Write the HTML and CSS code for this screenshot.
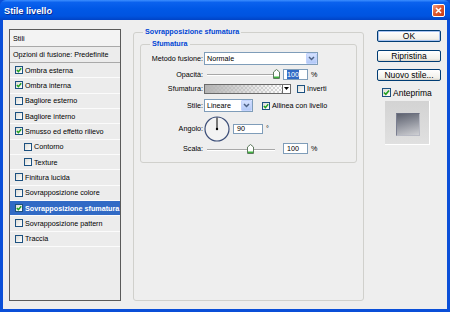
FILE: index.html
```html
<!DOCTYPE html>
<html lang="it">
<head>
  <meta charset="UTF-8">
  <title>Stile livello</title>
  <link rel="stylesheet" href="styles.css">
</head>
<body>
  <div class="window">
    <div class="titlebar">
      <span class="title">Stile livello</span>
      <span class="close">
        <svg width="7" height="7" viewBox="0 0 7 7"><path d="M1 1L6 6M6 1L1 6" stroke="#fff" stroke-width="1.6"/></svg>
      </span>
    </div>

    <div class="client">
      <!-- elenco stili -->
      <div class="styles">
        <div class="head first">Stili</div>
        <div class="head">Opzioni di fusione: Predefinite</div>
        <div class="item"><span class="cb"><svg viewBox="0 0 6 6"><path d="M0.8 3L2.4 4.6L5.2 1.2" fill="none" stroke="#21a121" stroke-width="1.4"/></svg></span>Ombra esterna</div>
        <div class="item"><span class="cb"><svg viewBox="0 0 6 6"><path d="M0.8 3L2.4 4.6L5.2 1.2" fill="none" stroke="#21a121" stroke-width="1.4"/></svg></span>Ombra interna</div>
        <div class="item"><span class="cb"></span>Bagliore esterno</div>
        <div class="item"><span class="cb"></span>Bagliore interno</div>
        <div class="item"><span class="cb"><svg viewBox="0 0 6 6"><path d="M0.8 3L2.4 4.6L5.2 1.2" fill="none" stroke="#21a121" stroke-width="1.4"/></svg></span>Smusso ed effetto rilievo</div>
        <div class="item sub"><span class="cb"></span>Contorno</div>
        <div class="item sub"><span class="cb"></span>Texture</div>
        <div class="item"><span class="cb"></span>Finitura lucida</div>
        <div class="item"><span class="cb"></span>Sovrapposizione colore</div>
        <div class="item sel"><span class="cb"><svg viewBox="0 0 6 6"><path d="M0.8 3L2.4 4.6L5.2 1.2" fill="none" stroke="#21a121" stroke-width="1.4"/></svg></span>Sovrapposizione sfumatura</div>
        <div class="item"><span class="cb"></span>Sovrapposizione pattern</div>
        <div class="item"><span class="cb"></span>Traccia</div>
      </div>

      <!-- pannello opzioni -->
      <fieldset class="group outer">
        <legend>Sovrapposizione sfumatura</legend>
        <fieldset class="group inner">
          <legend>Sfumatura</legend>

          <div class="row r1">
            <span class="lbl">Metodo fusione:</span>
            <div class="select wide">
              <span class="val">Normale</span>
              <span class="drop"><svg width="7" height="5" viewBox="0 0 7 5"><path d="M1 1L3.5 3.5L6 1" fill="none" stroke="#4d6185" stroke-width="1.5"/></svg></span>
            </div>
          </div>

          <div class="row r2">
            <span class="lbl">Opacità:</span>
            <div class="slider">
              <span class="track"></span>
              <svg class="thumb" style="left: 66px" width="7" height="10" viewBox="0 0 7 10"><path d="M0.5 3L3.5 0.5L6.5 3V9.5H0.5Z" fill="#fff" stroke="#5e7a5e"/><rect x="1" y="7.5" width="5" height="1.5" fill="#3fb33f"/></svg>
            </div>
            <div class="num"><span class="hl">100</span></div>
            <span class="unit">%</span>
          </div>

          <div class="row r3">
            <span class="lbl">Sfumatura:</span>
            <div class="swatch"></div>
            <span class="swatch-drop"><svg width="5" height="3" viewBox="0 0 5 3"><path d="M0 0H5L2.5 3Z" fill="#000"/></svg></span>
            <span class="cb gap"></span>
            <span class="opt">Inverti</span>
          </div>

          <div class="row r4">
            <span class="lbl">Stile:</span>
            <div class="select short">
              <span class="val">Lineare</span>
              <span class="drop"><svg width="7" height="5" viewBox="0 0 7 5"><path d="M1 1L3.5 3.5L6 1" fill="none" stroke="#4d6185" stroke-width="1.5"/></svg></span>
            </div>
            <span class="cb gap2"><svg viewBox="0 0 6 6"><path d="M0.8 3L2.4 4.6L5.2 1.2" fill="none" stroke="#21a121" stroke-width="1.4"/></svg></span>
            <span class="opt">Allinea con livello</span>
          </div>

          <div class="row r5">
            <span class="lbl">Angolo:</span>
            <svg class="dial" width="26" height="26" viewBox="0 0 26 26">
              <circle cx="13" cy="13" r="12" fill="#f3f3f3" stroke="#3c4e78" stroke-width="1.2"/>
              <path d="M13 13V1.5" stroke="#000"/>
              <circle cx="13" cy="13" r="1.2" fill="#000"/>
            </svg>
            <div class="num deg">90</div>
            <span class="unit">°</span>
          </div>

          <div class="row r6">
            <span class="lbl">Scala:</span>
            <div class="slider">
              <span class="track"></span>
              <svg class="thumb" style="left: 40px" width="7" height="10" viewBox="0 0 7 10"><path d="M0.5 3L3.5 0.5L6.5 3V9.5H0.5Z" fill="#fff" stroke="#5e7a5e"/><rect x="1" y="7.5" width="5" height="1.5" fill="#3fb33f"/></svg>
            </div>
            <div class="num">100</div>
            <span class="unit">%</span>
          </div>
        </fieldset>
      </fieldset>

      <!-- pulsanti -->
      <div class="side">
        <div class="btn default">OK</div>
        <div class="btn b2">Ripristina</div>
        <div class="btn b3">Nuovo stile...</div>
        <div class="preview-check">
          <span class="cb big"><svg viewBox="0 0 6 6"><path d="M0.8 3L2.4 4.6L5.2 1.2" fill="none" stroke="#21a121" stroke-width="1.4"/></svg></span>
          <span class="opt">Anteprima</span>
        </div>
        <div class="preview">
          <div class="preview-swatch"></div>
        </div>
      </div>
    </div>
  </div>
</body>
</html>
```

FILE: styles.css
```css
body {
  margin: 0;
  font-family: "Liberation Sans", Arial, sans-serif;
  font-size: 7.2px;
  color: #000;
  background: #fff;
}
.window {
  width: 450px;
  height: 312px;
  display: flex;
  flex-direction: column;
  background: #0a4fd8;
}
.titlebar {
  height: 20px;
  flex-shrink: 0;
  display: flex;
  align-items: center;
  justify-content: space-between;
  padding: 1px 5px 0 4px;
  box-sizing: border-box;
  background: linear-gradient(#3d8fff 0, #0b62ee 12%, #0058e6 45%, #0054e0 80%, #0043c6 100%);
  border-radius: 6px 6px 0 0;
}
.title {
  color: #fff;
  font-weight: bold;
  font-size: 9.2px;
  text-shadow: 1px 1px 0 #0b2a8f;
}
.close {
  width: 13px;
  height: 13px;
  box-sizing: border-box;
  border: 1px solid #fff;
  border-radius: 2px;
  background: linear-gradient(135deg, #f3a083, #e0592f 45%, #c63b15);
  display: flex;
  align-items: center;
  justify-content: center;
}
.client {
  flex: 1;
  margin: 0 3px 3px;
  background: #eeeeee;
  display: flex;
  align-items: flex-start;
  padding: 9px 0 0 6px;
}

/* lista stili */
.styles {
  width: 112px;
  height: 272px;
  box-sizing: border-box;
  border: 1px solid #5a5a5a;
  background: #ececec;
  flex-shrink: 0;
}
.head {
  height: 16px;
  box-sizing: border-box;
  border-bottom: 1px solid #a9a9a9;
  display: flex;
  align-items: center;
  padding-left: 3px;
}
.head.first {
  height: 17px;
  background: #f3f3f3;
}
.item {
  height: 15.33px;
  box-sizing: border-box;
  border-bottom: 1px solid #fbfbfb;
  display: flex;
  align-items: center;
  padding-left: 5px;
}
.item .cb {
  margin-right: 2px;
}
.item.sub {
  padding-left: 14px;
}
.item.sel {
  background: #316ac5;
  color: #fff;
  font-weight: bold;
}
.cb {
  width: 8px;
  height: 8px;
  box-sizing: border-box;
  border: 1px solid #1c5180;
  background: linear-gradient(135deg, #dcdcd6, #fff);
  display: inline-flex;
  flex-shrink: 0;
}
.cb svg {
  width: 6px;
  height: 6px;
}
.cb.big {
  width: 9px;
  height: 9px;
}
.cb.big svg {
  width: 7px;
  height: 7px;
}

/* gruppi */
.group {
  margin: 0;
  padding: 0;
  border: 1px solid #d0d0cc;
  border-radius: 3px;
  min-width: 0;
}
.group legend {
  margin-left: 9px;
  padding: 0 2px;
  color: #0046d5;
  font-weight: bold;
  line-height: 8px;
}
.outer {
  margin: -1px 0 0 12px;
  width: 231px;
  height: 273px;
  box-sizing: border-box;
  flex-shrink: 0;
}
.inner {
  margin: 4px 6px 0;
  padding: 3px 0 6px;
}
.row {
  display: flex;
  align-items: center;
}
.r1 { height: 15px; }
.r2 { height: 16px; }
.r3 { height: 13px; }
.r4 { height: 21px; }
.r5 { height: 25px; }
.r6 { height: 15px; }
.lbl {
  width: 62px;
  margin-right: 1px;
  text-align: right;
  flex-shrink: 0;
}
.select {
  height: 13px;
  box-sizing: border-box;
  border: 1px solid #7f9db9;
  background: #fff;
  display: flex;
  align-items: center;
  padding: 0 0 0 2px;
}
.select .val {
  flex: 1;
}
.select.wide { width: 114px; }
.select.short { width: 49px; }
.drop {
  width: 11px;
  height: 11px;
  box-sizing: border-box;
  border: 1px solid #c3d3fd;
  border-radius: 1px;
  background: linear-gradient(#d4e1fe, #b3c9f7);
  display: flex;
  align-items: center;
  justify-content: center;
}
.slider {
  position: relative;
  width: 74px;
  height: 10px;
  margin-left: 3px;
  margin-right: 2px;
}
.track {
  position: absolute;
  left: 0;
  top: 5px;
  width: 68px;
  height: 1px;
  background: #a8a8a8;
  border-bottom: 1px solid #fff;
}
.thumb {
  position: absolute;
  top: 0;
}
.num {
  width: 25px;
  height: 11px;
  box-sizing: border-box;
  border: 1px solid #7f9db9;
  background: #fff;
  display: flex;
  align-items: center;
  padding-left: 3px;
}
.hl {
  background: #316ac5;
  color: #fff;
}
.num.deg {
  width: 30px;
  height: 10px;
  margin-left: 3px;
}
.unit {
  margin-left: 3px;
}
.swatch {
  width: 79px;
  height: 10px;
  box-sizing: border-box;
  border: 1px solid #6a6a6a;
  background:
    linear-gradient(to right, #b4b4b4, rgba(190, 190, 190, 0)),
    repeating-conic-gradient(#d9d9d9 0 25%, #fff 0 50%) 0 0 / 4px 4px;
}
.swatch-drop {
  width: 8px;
  height: 10px;
  box-sizing: border-box;
  border: 1px solid #6a6a6a;
  border-left: none;
  background: #fff;
  display: flex;
  align-items: center;
  justify-content: center;
}
.cb.gap {
  margin-left: 6px;
  margin-right: 2px;
}
.cb.gap2 {
  margin-left: 9px;
  margin-right: 2px;
}

/* colonna pulsanti */
.side {
  width: 64px;
  margin: 1px 0 0 13px;
  display: flex;
  flex-direction: column;
  font-size: 8.5px;
}
.btn {
  height: 12px;
  box-sizing: border-box;
  border: 1px solid #003c74;
  border-radius: 2px;
  background: linear-gradient(#ffffff, #f1f0ea 80%, #d8d2c6);
  display: flex;
  align-items: center;
  justify-content: center;
}
.btn.default {
  box-shadow: inset 0 0 0 1px #a8c3f0;
}
.b2 { margin-top: 8px; }
.b3 { margin-top: 7px; }
.preview-check {
  height: 11px;
  margin: 6px 0 0 5px;
  display: flex;
  align-items: center;
}
.preview-check .cb {
  margin-right: 2px;
}
.preview {
  width: 45px;
  height: 44px;
  margin: 3px 0 0 8px;
  box-sizing: border-box;
  padding: 12px 0 0 11px;
  background: linear-gradient(#d3d3d3, #e0e0e0);
  border-right: 1px solid #fff;
  border-bottom: 1px solid #fff;
}
.preview-swatch {
  width: 24px;
  height: 23px;
  box-sizing: border-box;
  border: 1px solid #b8bac4;
  border-top-color: #6b6f80;
  border-left-color: #7a7e90;
  background: linear-gradient(165deg, #5d616e, #8f929c 45%, #cfd0d4);
}
```
